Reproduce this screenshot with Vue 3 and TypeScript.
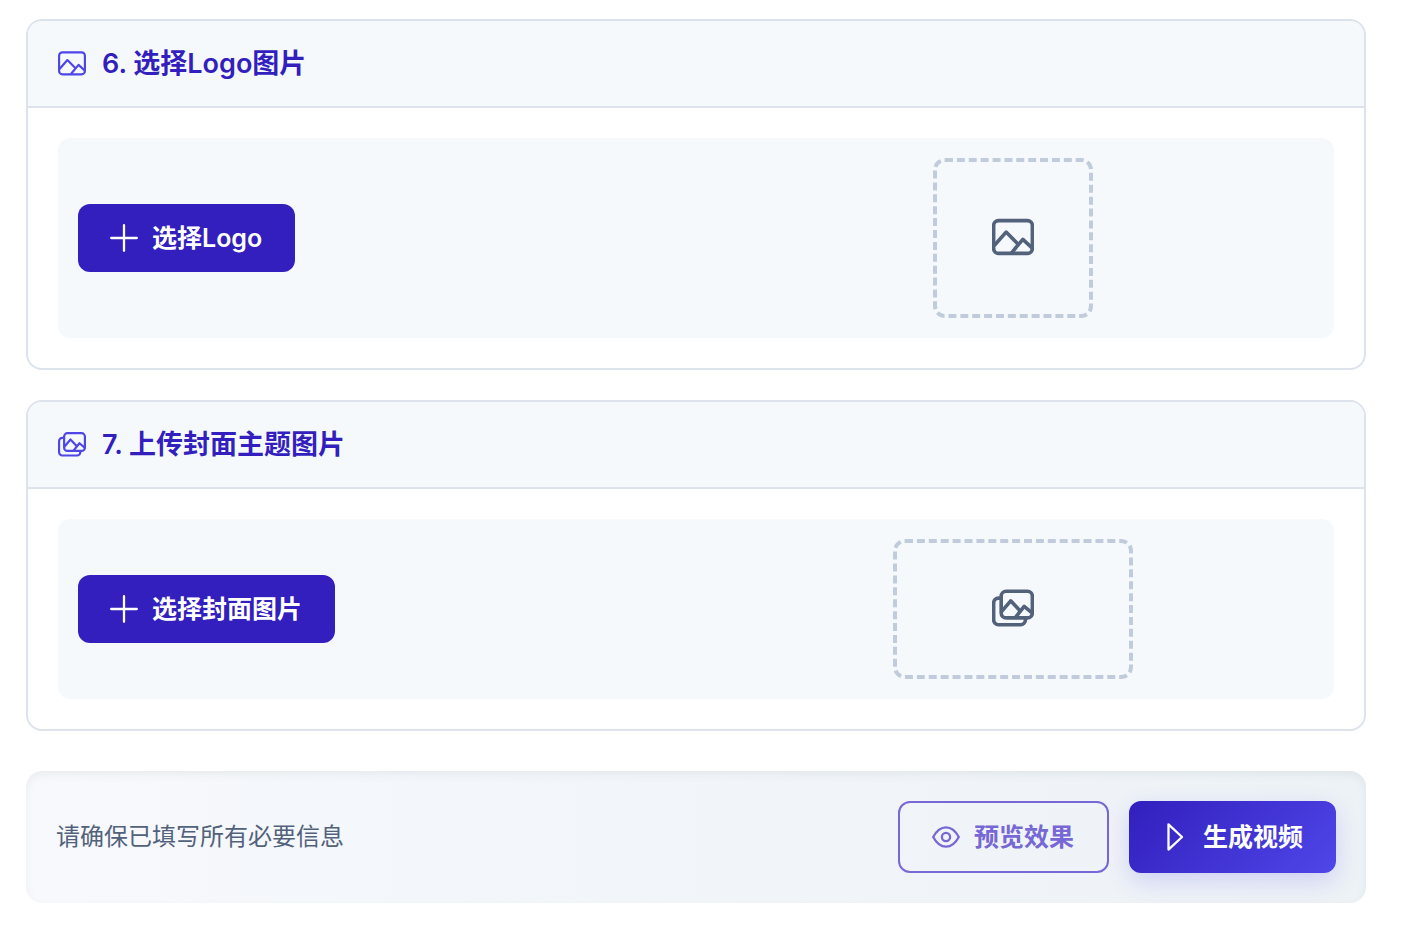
<script setup lang="ts">
interface UploadSection {
  id: string
  title: string
  action: string
  icon: 'picture' | 'gallery'
  shape: 'square' | 'wide'
}

const sections: UploadSection[] = [
  { id: 'logo', title: '6. 选择Logo图片', action: '选择Logo', icon: 'picture', shape: 'square' },
  { id: 'cover', title: '7. 上传封面主题图片', action: '选择封面图片', icon: 'gallery', shape: 'wide' },
]

const iconPaths: Record<UploadSection['icon'], string[]> = {
  picture: [
    'M20 14H108A15 15 0 0 1 123 29V99A15 15 0 0 1 108 114H20A15 15 0 0 1 5 99V29A15 15 0 0 1 20 14Z',
    'M7 90L43 49L79 85',
    'M59 113L94 71L122 97',
  ],
  gallery: [
    'M43 13H108A15 15 0 0 1 123 28V79A15 15 0 0 1 108 94H43A15 15 0 0 1 28 79V28A15 15 0 0 1 43 13Z',
    'M27 34H20A15 15 0 0 0 5 49V100A15 15 0 0 0 20 115H87A15 15 0 0 0 102 100V96',
    'M29 75L57 42L86 73',
    'M71 93L98 59L122 79',
  ],
}
</script>

<template>
  <main class="page">
    <section v-for="s in sections" :key="s.id" class="card" :aria-labelledby="s.id + '-title'">
      <header class="card-header">
        <svg class="icon" viewBox="0 3 128 128" aria-hidden="true">
          <path v-for="d in iconPaths[s.icon]" :key="d" :d="d" />
        </svg>
        <h2 :id="s.id + '-title'" class="card-title">{{ s.title }}</h2>
      </header>
      <div class="card-body">
        <div class="panel">
          <div>
            <button type="button" class="btn btn-pick">
              <svg class="btn-icon" viewBox="0 0 28 28" aria-hidden="true">
                <path d="M14 1.2V26.8M1.2 14H26.8" />
              </svg>
              <span>{{ s.action }}</span>
            </button>
          </div>
          <div class="placeholder" :class="s.shape">
            <svg class="icon icon-large" viewBox="0 3 128 128" aria-hidden="true">
              <path v-for="d in iconPaths[s.icon]" :key="d" :d="d" />
            </svg>
          </div>
        </div>
      </div>
    </section>

    <footer class="actions">
      <p class="hint">请确保已填写所有必要信息</p>
      <div class="buttons">
        <button type="button" class="btn btn-preview">
          <svg class="btn-icon" viewBox="0 0 28 28" aria-hidden="true">
            <path d="M1.2 14C4.6 7.6 9 4.3 14 4.3S23.4 7.6 26.8 14C23.4 20.4 19 23.7 14 23.7S4.6 20.4 1.2 14Z" />
            <circle cx="14" cy="14" r="4.1" />
          </svg>
          <span>预览效果</span>
        </button>
        <button type="button" class="btn btn-generate">
          <svg class="btn-icon" viewBox="0 0 28 28" aria-hidden="true">
            <path d="M7.5 1.4V26.6L21 14Z" />
          </svg>
          <span>生成视频</span>
        </button>
      </div>
    </footer>
  </main>
</template>

<style>
body {
  margin: 0;
  background: #ffffff;
}
</style>

<style scoped>
.page {
  box-sizing: border-box;
  padding: 19px 42px 39px 26px;
  font-family: Inter, "Noto Sans CJK SC", sans-serif;
}

.card {
  margin-bottom: 30px;
  border: 2px solid #dde3ed;
  border-radius: 16px;
  background: #ffffff;
  overflow: hidden;
}

.card-header {
  display: flex;
  align-items: center;
  gap: 16px;
  box-sizing: border-box;
  min-height: 87px;
  padding: 0 30px;
  border-bottom: 2px solid #dde3ed;
  background: #f5f9fc;
}

.card-title {
  margin: 0;
  color: #321fbd;
  font-size: 27px;
  font-weight: 600;
  line-height: 40px;
}

.icon {
  flex: none;
  width: 28px;
  height: 28px;
  fill: none;
  stroke: #4f46e8;
  stroke-width: 10;
  stroke-linejoin: round;
}

.icon-large {
  width: 42px;
  height: 42px;
  stroke: #52627b;
  stroke-width: 11;
}

.card-body {
  padding: 30px;
}

.panel {
  display: grid;
  grid-template-columns: 1fr 1fr;
  align-items: center;
  gap: 32px;
  padding: 20px;
  border-radius: 12px;
  background: #f5f9fc;
}

.placeholder {
  display: flex;
  align-items: center;
  justify-content: center;
  justify-self: center;
  box-sizing: border-box;
  border: 4px dashed #c0ccdb;
  border-radius: 12px;
}

.square {
  width: 160px;
  height: 160px;
}

.wide {
  width: 240px;
  height: 140px;
}

.btn {
  display: flex;
  align-items: center;
  gap: 14px;
  margin: 0;
  padding: 0 33px 0 32px;
  border: 0;
  border-radius: 12px;
  font-family: inherit;
  font-size: 25px;
  font-weight: 600;
  line-height: 36px;
  white-space: nowrap;
  cursor: pointer;
}

.btn-icon {
  flex: none;
  width: 28px;
  height: 28px;
  fill: none;
  stroke: currentColor;
  stroke-width: 2.3;
  stroke-linecap: round;
  stroke-linejoin: round;
}

.btn-pick {
  height: 68px;
  background: #321fbd;
  color: #ffffff;
}

.actions {
  display: flex;
  align-items: center;
  justify-content: space-between;
  margin-top: 40px;
  padding: 30px;
  border-radius: 16px;
  background: linear-gradient(90deg, #f8f9fc, #f3f7fb 30%, #edf2f6);
  box-shadow: inset 0 4px 10px rgba(0, 0, 0, 0.05);
}

.hint {
  margin: 0;
  color: #52627b;
  font-size: 24px;
  line-height: 36px;
}

.buttons {
  display: flex;
  gap: 20px;
}

.btn-preview {
  height: 72px;
  border: 2px solid #7768d5;
  background: transparent;
  color: #7768d5;
}

.btn-generate {
  height: 72px;
  background: linear-gradient(135deg, #321fbd, #4f46e9);
  box-shadow: 0 8px 24px rgba(79, 70, 229, 0.2);
  color: #ffffff;
}
</style>
